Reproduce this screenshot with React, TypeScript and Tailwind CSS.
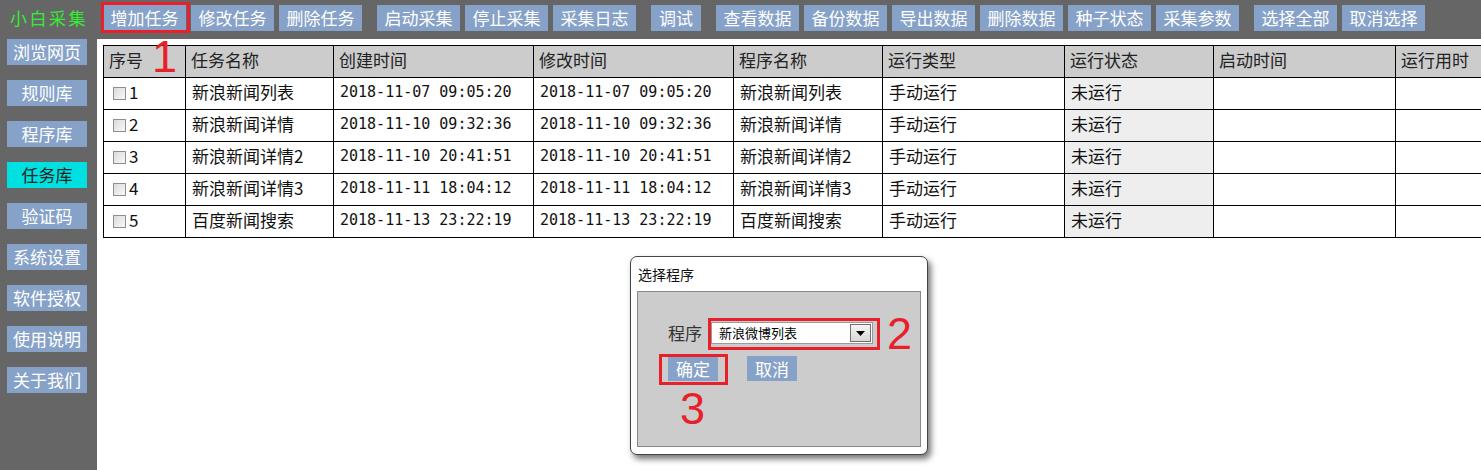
import React from 'react';

const topGroups: { label: string; w?: string }[][] = [
  [{ label: '增加任务' }, { label: '修改任务' }, { label: '删除任务' }],
  [{ label: '启动采集' }, { label: '停止采集' }, { label: '采集日志' }],
  [{ label: '调试', w: 'w-[50px]' }],
  [
    { label: '查看数据' },
    { label: '备份数据' },
    { label: '导出数据' },
    { label: '删除数据' },
    { label: '种子状态' },
    { label: '采集参数' },
  ],
  [{ label: '选择全部' }, { label: '取消选择' }],
];

const sideItems = ['浏览网页', '规则库', '程序库', '任务库', '验证码', '系统设置', '软件授权', '使用说明', '关于我们'];

const columns = [
  { title: '序号', w: 'w-[82px]' },
  { title: '任务名称', w: 'w-[148px]' },
  { title: '创建时间', w: 'w-[200px]' },
  { title: '修改时间', w: 'w-[200px]' },
  { title: '程序名称', w: 'w-[149px]' },
  { title: '运行类型', w: 'w-[182px]' },
  { title: '运行状态', w: 'w-[149px]' },
  { title: '启动时间', w: 'w-[182px]' },
  { title: '运行用时', w: 'w-[120px]' },
];

const tasks = [
  { id: 1, name: '新浪新闻列表', created: '2018-11-07 09:05:20', program: '新浪新闻列表' },
  { id: 2, name: '新浪新闻详情', created: '2018-11-10 09:32:36', program: '新浪新闻详情' },
  { id: 3, name: '新浪新闻详情2', created: '2018-11-10 20:41:51', program: '新浪新闻详情2' },
  { id: 4, name: '新浪新闻详情3', created: '2018-11-11 18:04:12', program: '新浪新闻详情3' },
  { id: 5, name: '百度新闻搜索', created: '2018-11-13 23:22:19', program: '百度新闻搜索' },
];

// red step numbers drawn over the screenshot
const marker = "absolute text-[45px] leading-none text-[#e8202a] font-['Liberation_Sans',sans-serif]";
const cell = 'border border-black pb-[3px]';

function Checkbox() {
  return (
    <span className="inline-block w-[13px] h-[13px] border border-[#8f8f8f] bg-gradient-to-br from-[#dcdcdc] to-[#f8f8f8] mr-[3px] align-[-1px]" />
  );
}

export default function App() {
  return (
    <div className="relative w-[1481px] h-[470px] overflow-hidden flex flex-col font-['Noto_Sans_CJK_SC',sans-serif]">
      {/* top toolbar */}
      <div className="h-[39px] bg-[#666666] flex items-start shrink-0">
        <div className="w-[97px] pl-[10px] pt-[5px] text-[17px] leading-[26px] tracking-[2.5px] text-[#33ee33]">小白采集</div>
        <div className="flex pt-[5px] pl-[6px] gap-[15px]">
          {topGroups.map((group, gi) => (
            <div key={gi} className="flex gap-[5px]">
              {group.map((b, bi) => (
                <div
                  key={b.label}
                  className={`relative ${b.w ?? 'w-[83px]'} h-[26px] bg-[#87a2c8] text-white text-[17px] leading-[26px] text-center`}
                >
                  {b.label}
                  {gi === 0 && bi === 0 && (
                    <span className="absolute -left-[2px] -top-[3px] -right-[4px] -bottom-[2px] border-[3px] border-[#e8202a]" />
                  )}
                </div>
              ))}
            </div>
          ))}
        </div>
      </div>

      <div className="flex flex-1 min-h-0">
        {/* sidebar */}
        <div className="w-[97px] bg-[#666666] flex flex-col gap-[15px] pl-[7px] shrink-0">
          {sideItems.map((s) => (
            <div
              key={s}
              className={`w-[80px] h-[26px] text-[17px] leading-[26px] text-center whitespace-nowrap ${
                s === '任务库' ? 'bg-[#00e0e0] text-[#222]' : 'bg-[#87a2c8] text-white'
              }`}
            >
              {s}
            </div>
          ))}
        </div>

        {/* main */}
        <div className="flex-1 bg-white overflow-hidden pt-[6px] pl-[6px]">
          <table className="table-fixed border-collapse w-[1412px] text-[17px] text-[#111]">
            <thead>
              <tr className="h-[32px] bg-[#cccccc]">
                {columns.map((c) => (
                  <th key={c.title} className={`${c.w} ${cell} text-left font-normal pl-[5px] text-[#222]`}>
                    {c.title}
                  </th>
                ))}
              </tr>
            </thead>
            <tbody>
              {tasks.map((t) => (
                <tr key={t.id} className="h-[32px]">
                  <td className={`${cell} pl-[9px]`}>
                    <Checkbox />
                    {t.id}
                  </td>
                  <td className={`${cell} pl-[6px]`}>{t.name}</td>
                  <td className={`${cell} pl-[6px] text-[15px] font-['DejaVu_Sans_Mono',monospace]`}>{t.created}</td>
                  <td className={`${cell} pl-[6px] text-[15px] font-['DejaVu_Sans_Mono',monospace]`}>{t.created}</td>
                  <td className={`${cell} pl-[6px]`}>{t.program}</td>
                  <td className={`${cell} pl-[6px]`}>手动运行</td>
                  <td className={`${cell} pl-[6px] bg-[#eeeeee]`}>未运行</td>
                  <td className={cell} />
                  <td className={cell} />
                </tr>
              ))}
            </tbody>
          </table>
        </div>
      </div>

      <span className={`${marker} left-[152px] top-[34px]`}>1</span>

      {/* dialog */}
      <div className="absolute left-[630px] top-[256px] w-[298px] h-[199px] bg-white rounded-[7px] border border-[#444] shadow-[3px_4px_6px_rgba(0,0,0,0.55)] flex flex-col px-[6px] pb-[7px]">
        <div className="h-[34px] pt-[8px] pl-[1px] text-[14px] leading-[18px] text-[#111]">选择程序</div>
        <div className="relative flex-1 bg-[#cccccc] border border-[#888] flex flex-col pl-[30px] pt-[30px]">
          <div className="flex items-center h-[22px]">
            <span className="text-[17px] text-[#333] mr-[9px]">程序</span>
            <div className="relative w-[162px] h-[22px] bg-white border border-[#9a9a9a] flex items-center pl-[7px] text-[13px] text-black">
              新浪微博列表
              <span className="absolute right-[1px] top-[1px] w-[21px] h-[18px] border border-[#707070] bg-gradient-to-b from-[#f4f4f4] to-[#d8d8d8] flex items-center justify-center">
                <svg width="9" height="5" viewBox="0 0 9 5">
                  <path d="M0 0 H9 L4.5 5 Z" fill="#000" />
                </svg>
              </span>
              <span className="absolute -left-[4px] -top-[5px] -right-[8px] -bottom-[7px] border-[3px] border-[#e8202a]" />
            </div>
          </div>
          <span className={`${marker} left-[249px] top-[19px]`}>2</span>
          <div className="flex gap-[29px] mt-[12px]">
            <div className="relative w-[50px] h-[25px] bg-[#87a2c8] text-white text-[17px] leading-[25px] text-center">
              确定
              <span className="absolute -left-[9px] -top-[2px] -right-[10px] -bottom-[4px] border-[3px] border-[#e8202a]" />
            </div>
            <div className="w-[50px] h-[25px] bg-[#87a2c8] text-white text-[17px] leading-[25px] text-center">取消</div>
          </div>
          <span className={`${marker} left-[42px] top-[94px]`}>3</span>
        </div>
      </div>
    </div>
  );
}
